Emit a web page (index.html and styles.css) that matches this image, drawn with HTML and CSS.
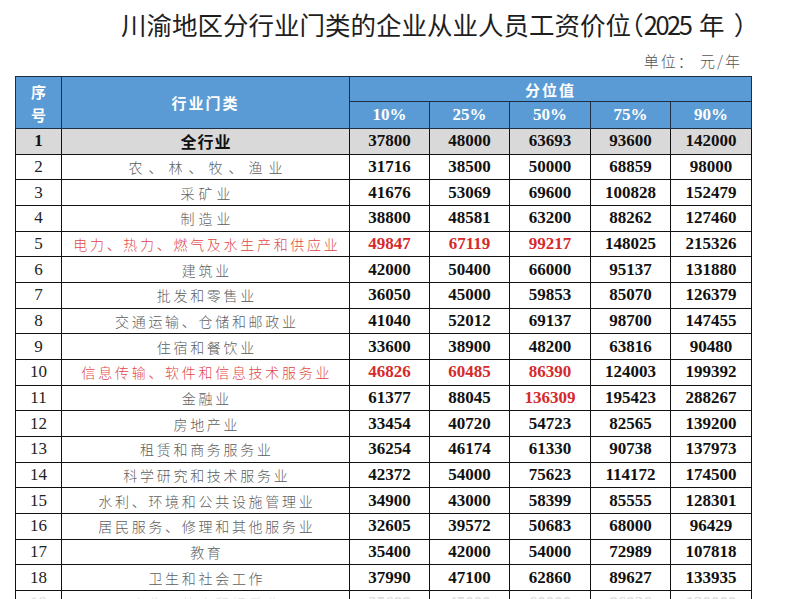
FILE: index.html
```html
<!DOCTYPE html>
<html lang="zh-CN">
<head>
<meta charset="utf-8">
<title>川渝地区分行业门类的企业从业人员工资价位</title>
<link rel="stylesheet" href="styles.css">
</head>
<body>
<div class="sheet">
  <h1 class="title">川渝地区分行业门类的企业从业人员工资价位<span class="lp">（</span><span class="yr">2025</span> 年<span class="rp">）</span></h1>
  <div class="unit">单位： 元/年</div>
  <table class="wages">
    <colgroup>
      <col class="c-no"><col class="c-name"><col class="c-v"><col class="c-v"><col class="c-v2"><col class="c-v"><col class="c-v3">
    </colgroup>
    <thead>
      <tr class="h1">
        <th rowspan="2" class="no-h">序<br>号</th>
        <th rowspan="2" class="name-h">行业门类</th>
        <th colspan="5" class="grp-h">分位值</th>
      </tr>
      <tr class="h2">
        <th class="pct">10%</th><th class="pct">25%</th><th class="pct">50%</th><th class="pct">75%</th><th class="pct">90%</th>
      </tr>
    </thead>
    <tbody>
      <tr class="total"><td class="no">1</td><td class="name">全行业</td><td>37800</td><td>48000</td><td>63693</td><td>93600</td><td>142000</td></tr>
      <tr><td class="no">2</td><td class="name wide">农、林、牧、渔业</td><td>31716</td><td>38500</td><td>50000</td><td>68859</td><td>98000</td></tr>
      <tr><td class="no">3</td><td class="name mid">采矿业</td><td>41676</td><td>53069</td><td>69600</td><td>100828</td><td>152479</td></tr>
      <tr><td class="no">4</td><td class="name mid">制造业</td><td>38800</td><td>48581</td><td>63200</td><td>88262</td><td>127460</td></tr>
      <tr><td class="no">5</td><td class="name red">电力、热力、燃气及水生产和供应业</td><td class="red">49847</td><td class="red">67119</td><td class="red">99217</td><td>148025</td><td>215326</td></tr>
      <tr><td class="no">6</td><td class="name">建筑业</td><td>42000</td><td>50400</td><td>66000</td><td>95137</td><td>131880</td></tr>
      <tr><td class="no">7</td><td class="name">批发和零售业</td><td>36050</td><td>45000</td><td>59853</td><td>85070</td><td>126379</td></tr>
      <tr><td class="no">8</td><td class="name">交通运输、仓储和邮政业</td><td>41040</td><td>52012</td><td>69137</td><td>98700</td><td>147455</td></tr>
      <tr><td class="no">9</td><td class="name">住宿和餐饮业</td><td>33600</td><td>38900</td><td>48200</td><td>63816</td><td>90480</td></tr>
      <tr><td class="no">10</td><td class="name red">信息传输、软件和信息技术服务业</td><td class="red">46826</td><td class="red">60485</td><td class="red">86390</td><td>124003</td><td>199392</td></tr>
      <tr><td class="no">11</td><td class="name">金融业</td><td>61377</td><td>88045</td><td class="red">136309</td><td>195423</td><td>288267</td></tr>
      <tr><td class="no">12</td><td class="name">房地产业</td><td>33454</td><td>40720</td><td>54723</td><td>82565</td><td>139200</td></tr>
      <tr><td class="no">13</td><td class="name">租赁和商务服务业</td><td>36254</td><td>46174</td><td>61330</td><td>90738</td><td>137973</td></tr>
      <tr><td class="no">14</td><td class="name">科学研究和技术服务业</td><td>42372</td><td>54000</td><td>75623</td><td>114172</td><td>174500</td></tr>
      <tr><td class="no">15</td><td class="name">水利、环境和公共设施管理业</td><td>34900</td><td>43000</td><td>58399</td><td>85555</td><td>128301</td></tr>
      <tr><td class="no">16</td><td class="name">居民服务、修理和其他服务业</td><td>32605</td><td>39572</td><td>50683</td><td>68000</td><td>96429</td></tr>
      <tr><td class="no">17</td><td class="name">教育</td><td>35400</td><td>42000</td><td>54000</td><td>72989</td><td>107818</td></tr>
      <tr><td class="no">18</td><td class="name">卫生和社会工作</td><td>37990</td><td>47100</td><td>62860</td><td>89627</td><td>133935</td></tr>
      <tr class="faded"><td class="no">19</td><td class="name">文化、体育和娱乐业</td><td>35688</td><td>45000</td><td>60000</td><td>86926</td><td>130000</td></tr>
    </tbody>
  </table>
</div>
</body>
</html>
```

FILE: styles.css
```css
html, body {
  margin: 0;
  padding: 0;
  background: #ffffff;
}

.sheet {
  width: 736px;
  margin-left: 15px;
  padding-top: 9px;
}

.title {
  margin: 0;
  padding-left: 106px;
  font-family: "Noto Sans CJK SC", "Noto Sans", sans-serif;
  font-weight: 400;
  font-size: 25.5px;
  line-height: 30px;
  color: #1e1e1e;
  text-align: left;
  white-space: nowrap;
}

.title .lp,
.title .rp {
  font-feature-settings: "halt" 1;
}

.title .yr {
  letter-spacing: -2.5px;
  margin-right: 3px;
}

.title .rp {
  margin-left: 9px;
}

.unit {
  margin-top: 13px;
  padding-right: 9px;
  font-family: "Noto Sans CJK SC", sans-serif;
  font-weight: 300;
  font-size: 15px;
  line-height: 18px;
  letter-spacing: 2px;
  color: #555555;
  text-align: right;
}

.wages {
  margin-top: 6px;
  width: 736px;
  table-layout: fixed;
  border-collapse: collapse;
  font-family: "Liberation Serif", "Times New Roman", serif;
}

.c-no { width: 46px; }
.c-name { width: 288px; }
.c-v { width: 80px; }
.c-v2 { width: 81px; }
.c-v3 { width: 81px; }

.wages th,
.wages td {
  border: 1px solid #111111;
  padding: 0;
  text-align: center;
  vertical-align: middle;
}

.wages thead th {
  background: #5b9bd5;
  color: #ffffff;
  border-color: #1d2f45;
}

.h1 { height: 25px; }
.h2 { height: 27px; }

.no-h,
.name-h,
.grp-h {
  font-family: "Noto Sans CJK SC", sans-serif;
  font-weight: 700;
  font-size: 15px;
}

.no-h {
  line-height: 23px;
}

.name-h {
  letter-spacing: 2px;
  padding-left: 2px;
}

.grp-h {
  letter-spacing: 2px;
  padding-left: 2px;
}

.pct {
  font-family: "Liberation Serif", "Times New Roman", serif;
  font-weight: 700;
  font-size: 17px;
}

.wages tbody tr {
  height: 25.68px;
}

.wages tbody td {
  font-weight: 700;
  font-size: 17px;
  color: #111111;
}

.wages tbody td.no {
  font-weight: 400;
  color: #222222;
}

.wages tbody td.name {
  font-family: "Noto Sans CJK SC", sans-serif;
  font-weight: 300;
  font-size: 14px;
  letter-spacing: 2.7px;
  padding-left: 2.7px;
  color: #5e5e5e;
}

.wages tbody td.name.wide {
  letter-spacing: 6px;
  padding-left: 6px;
}

.wages tbody td.name.mid {
  letter-spacing: 4px;
  padding-left: 4px;
}

.wages tbody td.red {
  color: #d62a2a;
}

.wages tbody td.name.red {
  color: #e04848;
}

.total td {
  background: #d9d9d9;
}

.wages tbody .total td.no {
  font-weight: 700;
  color: #111111;
}

.wages tbody .total td.name {
  font-weight: 700;
  font-size: 16px;
  letter-spacing: 1px;
  padding-left: 1px;
  color: #111111;
}

.wages tbody .faded td,
.wages tbody .faded td.no,
.wages tbody .faded td.name {
  color: #dddddd;
}
```
